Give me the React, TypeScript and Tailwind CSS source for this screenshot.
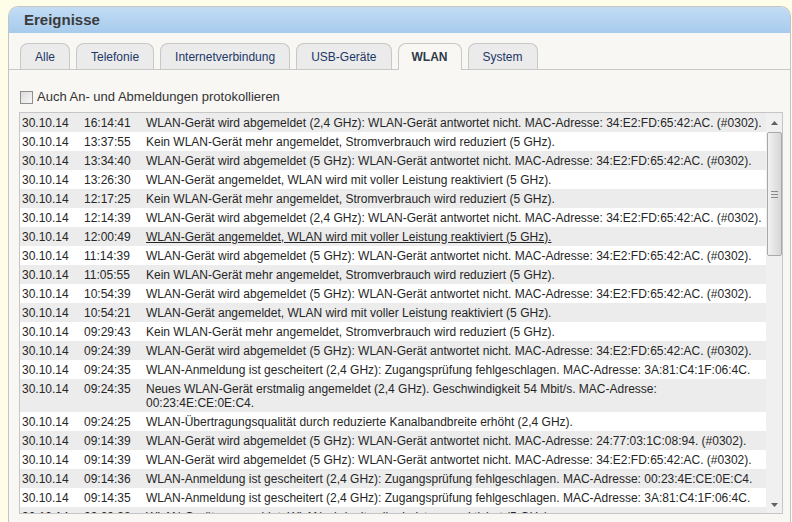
import React from 'react';

type LogRow = { date: string; time: string; text: string; hover?: boolean };

const rows: LogRow[] = [
  { date: '30.10.14', time: '16:14:41', text: 'WLAN-Gerät wird abgemeldet (2,4 GHz): WLAN-Gerät antwortet nicht. MAC-Adresse: 34:E2:FD:65:42:AC. (#0302).' },
  { date: '30.10.14', time: '13:37:55', text: 'Kein WLAN-Gerät mehr angemeldet, Stromverbrauch wird reduziert (5 GHz).' },
  { date: '30.10.14', time: '13:34:40', text: 'WLAN-Gerät wird abgemeldet (5 GHz): WLAN-Gerät antwortet nicht. MAC-Adresse: 34:E2:FD:65:42:AC. (#0302).' },
  { date: '30.10.14', time: '13:26:30', text: 'WLAN-Gerät angemeldet, WLAN wird mit voller Leistung reaktiviert (5 GHz).' },
  { date: '30.10.14', time: '12:17:25', text: 'Kein WLAN-Gerät mehr angemeldet, Stromverbrauch wird reduziert (5 GHz).' },
  { date: '30.10.14', time: '12:14:39', text: 'WLAN-Gerät wird abgemeldet (2,4 GHz): WLAN-Gerät antwortet nicht. MAC-Adresse: 34:E2:FD:65:42:AC. (#0302).' },
  { date: '30.10.14', time: '12:00:49', text: 'WLAN-Gerät angemeldet, WLAN wird mit voller Leistung reaktiviert (5 GHz).', hover: true },
  { date: '30.10.14', time: '11:14:39', text: 'WLAN-Gerät wird abgemeldet (5 GHz): WLAN-Gerät antwortet nicht. MAC-Adresse: 34:E2:FD:65:42:AC. (#0302).' },
  { date: '30.10.14', time: '11:05:55', text: 'Kein WLAN-Gerät mehr angemeldet, Stromverbrauch wird reduziert (5 GHz).' },
  { date: '30.10.14', time: '10:54:39', text: 'WLAN-Gerät wird abgemeldet (5 GHz): WLAN-Gerät antwortet nicht. MAC-Adresse: 34:E2:FD:65:42:AC. (#0302).' },
  { date: '30.10.14', time: '10:54:21', text: 'WLAN-Gerät angemeldet, WLAN wird mit voller Leistung reaktiviert (5 GHz).' },
  { date: '30.10.14', time: '09:29:43', text: 'Kein WLAN-Gerät mehr angemeldet, Stromverbrauch wird reduziert (5 GHz).' },
  { date: '30.10.14', time: '09:24:39', text: 'WLAN-Gerät wird abgemeldet (5 GHz): WLAN-Gerät antwortet nicht. MAC-Adresse: 34:E2:FD:65:42:AC. (#0302).' },
  { date: '30.10.14', time: '09:24:35', text: 'WLAN-Anmeldung ist gescheitert (2,4 GHz): Zugangsprüfung fehlgeschlagen. MAC-Adresse: 3A:81:C4:1F:06:4C.' },
  { date: '30.10.14', time: '09:24:35', text: 'Neues WLAN-Gerät erstmalig angemeldet (2,4 GHz). Geschwindigkeit 54 Mbit/s. MAC-Adresse: 00:23:4E:CE:0E:C4.' },
  { date: '30.10.14', time: '09:24:25', text: 'WLAN-Übertragungsqualität durch reduzierte Kanalbandbreite erhöht (2,4 GHz).' },
  { date: '30.10.14', time: '09:14:39', text: 'WLAN-Gerät wird abgemeldet (5 GHz): WLAN-Gerät antwortet nicht. MAC-Adresse: 24:77:03:1C:08:94. (#0302).' },
  { date: '30.10.14', time: '09:14:39', text: 'WLAN-Gerät wird abgemeldet (5 GHz): WLAN-Gerät antwortet nicht. MAC-Adresse: 34:E2:FD:65:42:AC. (#0302).' },
  { date: '30.10.14', time: '09:14:36', text: 'WLAN-Anmeldung ist gescheitert (2,4 GHz): Zugangsprüfung fehlgeschlagen. MAC-Adresse: 00:23:4E:CE:0E:C4.' },
  { date: '30.10.14', time: '09:14:35', text: 'WLAN-Anmeldung ist gescheitert (2,4 GHz): Zugangsprüfung fehlgeschlagen. MAC-Adresse: 3A:81:C4:1F:06:4C.' },
  { date: '30.10.14', time: '09:09:38', text: 'WLAN-Gerät angemeldet, WLAN wird mit voller Leistung reaktiviert (5 GHz).' },
];

const tabs = ['Alle', 'Telefonie', 'Internetverbindung', 'USB-Geräte', 'WLAN', 'System'];

function Scrollbar() {
  return (
    <div className="w-[16px] shrink-0 bg-[#f0f0f0] flex flex-col items-center">
      <div className="h-[19px] flex items-center justify-center">
        <svg width="7" height="4" viewBox="0 0 7 4">
          <path d="M0 4 L3.5 0 L7 4 Z" fill="#606060" />
        </svg>
      </div>
      <div className="w-[15px] h-[124px] rounded-[2px] border border-[#a8a8a8] bg-gradient-to-r from-[#f2f2f2] to-[#d6d6d6] flex flex-col items-center justify-center gap-[2px]">
        <div className="w-[7px] h-px bg-[#8a8a8a]" />
        <div className="w-[7px] h-px bg-[#8a8a8a]" />
        <div className="w-[7px] h-px bg-[#8a8a8a]" />
      </div>
      <div className="flex-1" />
      <div className="h-[17px] flex items-center justify-center">
        <svg width="7" height="4" viewBox="0 0 7 4">
          <path d="M0 0 L3.5 4 L7 0 Z" fill="#606060" />
        </svg>
      </div>
    </div>
  );
}

export default function App() {
  return (
    <div className="w-[792px] h-[522px] overflow-hidden bg-[#fdfde8] pt-[6px] pl-[8px] pr-px font-['Liberation_Sans',Arial,sans-serif]">
      <div className="h-full flex flex-col rounded-t-[10px] border-l border-t border-r border-[#c4c4c4] bg-[#f8f7f3] overflow-hidden">
        <div className="h-[26px] shrink-0 flex items-center pl-[15px] bg-gradient-to-b from-[#c2dcf4] to-[#a7cbed] text-[15px] font-bold text-[#3b3b3b]">
          Ereignisse
        </div>
        <div className="flex gap-[6px] pt-[10px] px-[11px] border-b border-[#c8c8c8] shrink-0">
          {tabs.map((t) => {
            const active = t === 'WLAN';
            return (
              <div
                key={t}
                className={
                  active
                    ? 'h-[27px] -mb-px pb-px px-[13px] flex items-center rounded-t-[8px] border border-b-0 border-[#c8c8c8] bg-[#f8f7f3] text-[12px] font-bold text-[#2f3a4a]'
                    : 'h-[26px] px-[14px] flex items-center rounded-t-[8px] border border-b-0 border-[#c8c8c8] bg-[#ebebeb] text-[12px] text-[#1d3766]'
                }
              >
                {t}
              </div>
            );
          })}
        </div>
        <label className="flex items-center gap-[4px] pl-[11px] mt-[20px] h-[14px] text-[13px] text-[#333]">
          <span className="w-[13px] h-[13px] border border-[#8f8f8f] bg-gradient-to-br from-[#dcdcdc] to-[#f7f7f7]" />
          Auch An- und Abmeldungen protokollieren
        </label>
        <div className="mt-[8px] ml-[10px] mr-[7px] h-[402px] shrink-0 border border-[#c6c6c6] bg-white flex overflow-hidden">
          <div className="flex-1 overflow-hidden">
            {rows.map((r, i) => (
              <div
                key={i}
                className={`grid grid-cols-[62px_62px_1fr] pl-[2px] py-[2.5px] leading-[14px] text-[12px] text-[#262626] ${i % 2 === 0 ? 'bg-[#ececec]' : 'bg-white'}`}
              >
                <span>{r.date}</span>
                <span>{r.time}</span>
                <span className={r.hover ? 'underline' : ''}>{r.text}</span>
              </div>
            ))}
          </div>
          <Scrollbar />
        </div>
      </div>
    </div>
  );
}
